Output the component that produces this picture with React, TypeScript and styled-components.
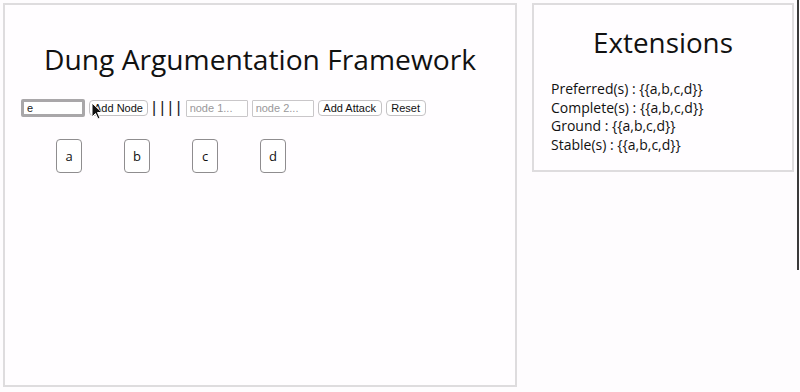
import React from "react";
import styled, { createGlobalStyle } from "styled-components";

const GlobalStyle = createGlobalStyle`
  html, body {
    margin: 0;
    padding: 0;
    background: #fefcfe;
    font-family: "Open Sans", "Liberation Sans", sans-serif;
    color: #111;
  }
`;

const Page = styled.div`
  display: flex;
  align-items: flex-start;
  gap: 15px;
  padding: 3px 0 0 3px;
  width: 800px;
  height: 392px;
  box-sizing: border-box;
  position: relative;
`;

const Panel = styled.div<{ $w: number; $h: number }>`
  width: ${(p) => p.$w}px;
  height: ${(p) => p.$h}px;
  box-sizing: border-box;
  border: 2px solid #dedcde;
  background: #fffdff;
  position: relative;
`;

const Title = styled.h1`
  margin: 0;
  padding-top: 34px;
  text-align: center;
  font-weight: 400;
  font-size: 28.2px;
  line-height: 40px;
`;

const Toolbar = styled.div`
  display: flex;
  align-items: center;
  gap: 4px;
  margin: 20px 0 0 16px;
  height: 18px;
`;

const TextInput = styled.input<{ $focused?: boolean; $w: number }>`
  box-sizing: border-box;
  width: ${(p) => p.$w}px;
  height: ${(p) => (p.$focused ? 18 : 17)}px;
  padding: 0 3px;
  font-family: "Liberation Sans", Arial, sans-serif;
  font-size: 11px;
  color: #222;
  background: #fff;
  border: ${(p) => (p.$focused ? "3px solid #a9a7a9" : "1px solid #c9c7c9")};
  border-radius: ${(p) => (p.$focused ? "2px" : "1px")};
  outline: none;
  &::placeholder {
    color: #9a989a;
  }
`;

const Button = styled.button<{ $w: number }>`
  box-sizing: border-box;
  width: ${(p) => p.$w}px;
  height: 16px;
  padding: 0;
  font-family: "Liberation Sans", Arial, sans-serif;
  font-size: 11px;
  line-height: 14px;
  color: #111;
  background: #fff;
  border: 1px solid #c4c2c4;
  border-radius: 4px;
`;

const Bars = styled.span`
  font-family: "Liberation Sans", Arial, sans-serif;
  font-size: 16px;
  letter-spacing: 4px;
  color: #222;
  margin: 0 -3px 0 0;
  line-height: 18px;
`;

const NodeRow = styled.div`
  display: flex;
  margin: 22px 0 0 51px;
`;

const NodeSlot = styled.div`
  width: 68px;
`;

const Node = styled.div`
  width: 26px;
  height: 34px;
  box-sizing: border-box;
  border: 1px solid #8f8d8f;
  border-radius: 4px;
  background: #fff;
  display: flex;
  align-items: center;
  justify-content: center;
  font-size: 13px;
`;

const ExtTitle = styled.h2`
  margin: 0;
  padding-top: 18px;
  text-align: center;
  font-weight: 400;
  font-size: 27.8px;
  line-height: 38px;
`;

const ExtList = styled.div`
  margin: 19px 0 0 17px;
  font-size: 14px;
  line-height: 18.7px;
`;

const Cursor = styled.svg`
  position: absolute;
  left: 91px;
  top: 102px;
`;

const EdgeLine = styled.div`
  position: absolute;
  right: 1px;
  top: 0;
  width: 2px;
  height: 270px;
  background: #3a3a3a;
`;

const extensions = [
  ["Preferred(s)", "{{a,b,c,d}}"],
  ["Complete(s)", "{{a,b,c,d}}"],
  ["Ground", "{{a,b,c,d}}"],
  ["Stable(s)", "{{a,b,c,d}}"],
];

export default function App() {
  return (
    <>
      <GlobalStyle />
      <Page>
        <Panel $w={514} $h={384}>
          <Title>Dung Argumentation Framework</Title>
          <Toolbar>
            <TextInput $focused $w={64} defaultValue="e" />
            <Button $w={59}>Add Node</Button>
            <Bars>||||</Bars>
            <TextInput $w={62} placeholder="node 1..." />
            <TextInput $w={62} placeholder="node 2..." />
            <Button $w={64}>Add Attack</Button>
            <Button $w={40}>Reset</Button>
          </Toolbar>
          <NodeRow>
            {["a", "b", "c", "d"].map((n) => (
              <NodeSlot key={n}>
                <Node>{n}</Node>
              </NodeSlot>
            ))}
          </NodeRow>
        </Panel>
        <Panel $w={262} $h={169}>
          <ExtTitle>Extensions</ExtTitle>
          <ExtList>
            {extensions.map(([k, v]) => (
              <div key={k}>
                {k} : {v}
              </div>
            ))}
          </ExtList>
        </Panel>
        <Cursor width="12" height="18" viewBox="0 0 12 18">
          <path d="M1 1 L1 15 L4.5 11.5 L7 17 L9 16 L6.5 10.5 L11 10.5 Z" fill="#111" stroke="#fff" strokeWidth="1" />
        </Cursor>
        <EdgeLine />
      </Page>
    </>
  );
}
